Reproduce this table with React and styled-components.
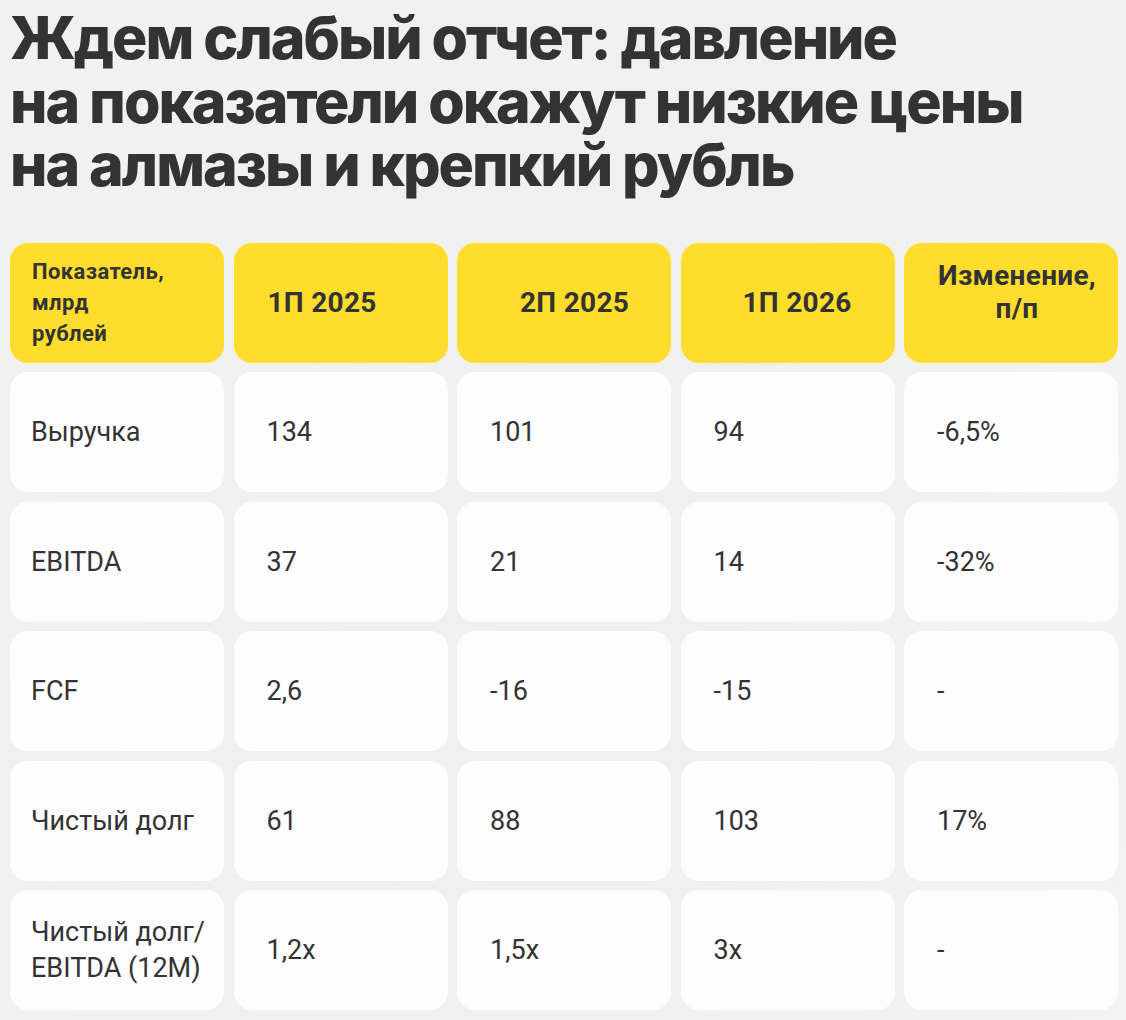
import React from "react";
import styled, { createGlobalStyle } from "styled-components";

const GlobalStyle = createGlobalStyle`
  html, body {
    margin: 0;
    padding: 0;
    background: #f0f0f0;
  }
  body {
    font-family: Roboto, "Liberation Sans", sans-serif;
    color: #333;
  }
`;

const Page = styled.div`
  width: 1126px;
  height: 1020px;
  box-sizing: border-box;
  padding: 6px 10px 0 10px;
  background: linear-gradient(100deg, #f1f1f1 0%, #f0f0f0 60%, #f3f3f3 100%);
  overflow: hidden;
`;

const Title = styled.h1`
  margin: 0 0 46px 0;
  font-family: Inter, Roboto, sans-serif;
  font-weight: 800;
  font-size: 59px;
  line-height: 63.5px;
  letter-spacing: -2px;
  color: #333;
`;

const Table = styled.div`
  display: grid;
  grid-template-columns: repeat(5, 214px);
  grid-auto-rows: 120px;
  column-gap: 9.5px;
  row-gap: 9.5px;
`;

const Cell = styled.div`
  border-radius: 18px;
  background: ${({ $head }) => ($head ? "#ffdd2d" : "#fdfdfd")};
  display: flex;
  align-items: center;
  box-sizing: border-box;
  padding-left: ${({ $indent }) => $indent}px;
  color: #333;
`;

const HeadLabel = styled.div`
  font-weight: 700;
  font-size: 22px;
  line-height: 31px;
  letter-spacing: 0.4px;
`;

const HeadText = styled.div`
  font-weight: 700;
  font-size: 28px;
  line-height: 33px;
  text-align: center;
  letter-spacing: 0.3px;
  margin-top: ${({ $lift }) => ($lift ? -22 : 0)}px;
`;

const Value = styled.div`
  font-size: 27px;
  line-height: 36px;
  font-weight: 400;
`;

const head = [
  { text: "1П 2025", indent: 34 },
  { text: "2П 2025", indent: 63 },
  { text: "1П 2026", indent: 62 },
  { text: "Изменение,\nп/п", indent: 34, lift: true },
];

const rows = [
  ["Выручка", "134", "101", "94", "-6,5%"],
  ["EBITDA", "37", "21", "14", "-32%"],
  ["FCF", "2,6", "-16", "-15", "-"],
  ["Чистый долг", "61", "88", "103", "17%"],
  ["Чистый долг/\nEBITDA (12M)", "1,2x", "1,5x", "3x", "-"],
];

const lines = (s) =>
  s.split("\n").map((l, i) => (
    <React.Fragment key={i}>
      {i > 0 && <br />}
      {l}
    </React.Fragment>
  ));

export default function App() {
  return (
    <Page>
      <GlobalStyle />
      <Title>
        Ждем слабый отчет: давление
        <br />
        на показатели окажут низкие цены
        <br />
        на алмазы и крепкий рубль
      </Title>
      <Table>
        <Cell $head $indent={22}>
          <HeadLabel>
            Показатель,
            <br />
            млрд
            <br />
            рублей
          </HeadLabel>
        </Cell>
        {head.map((h) => (
          <Cell $head $indent={h.indent} key={h.text}>
            <HeadText $lift={h.lift}>{lines(h.text)}</HeadText>
          </Cell>
        ))}
        {rows.map((r) =>
          r.map((v, i) => (
            <Cell $indent={i === 0 ? 21 : 33} key={r[0] + i}>
              <Value>{lines(v)}</Value>
            </Cell>
          ))
        )}
      </Table>
    </Page>
  );
}
